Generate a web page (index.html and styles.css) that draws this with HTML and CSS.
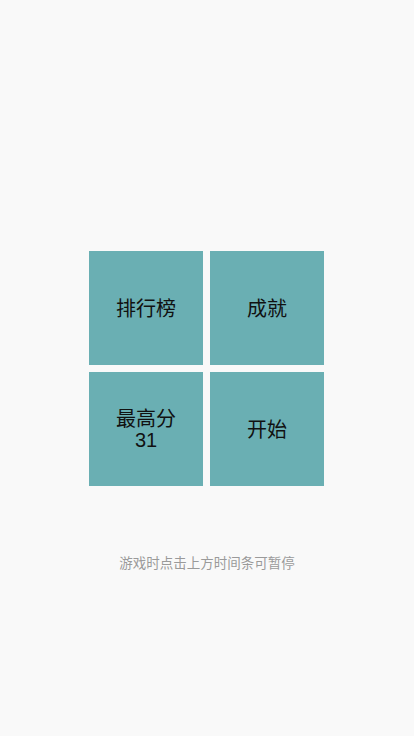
FILE: index.html
```html
<!DOCTYPE html>
<html lang="zh">
<head>
<meta charset="utf-8">
<title>菜单</title>
<link rel="stylesheet" href="styles.css">
</head>
<body>
<div class="page">
  <div class="spacer"></div>
  <div class="tiles">
    <div class="tile"><span class="label">排行榜</span></div>
    <div class="tile"><span class="label">成就</span></div>
    <div class="tile"><span class="label">最高分</span><span class="label score">31</span></div>
    <div class="tile"><span class="label">开始</span></div>
  </div>
  <div class="footer">
    <p class="note">游戏时点击上方时间条可暂停</p>
  </div>
</div>
</body>
</html>
```
FILE: styles.css
```css
html, body {
  margin: 0;
  padding: 0;
  background: #f9f9f9;
}
.page {
  height: 736px;
  display: grid;
  grid-template-rows: 1fr auto 1fr;
  justify-items: center;
  font-family: "Noto Sans CJK SC", "Noto Sans", sans-serif;
}
.tiles {
  display: grid;
  grid-template-columns: 114px 114px;
  grid-auto-rows: 114px;
  gap: 7px;
  margin-right: 1px;
}
.tile {
  background: #6aafb3;
  color: #111;
  font-size: 20px;
  display: flex;
  flex-direction: column;
  align-items: center;
  justify-content: center;
  text-align: center;
}
.label {
  display: block;
  line-height: 23px;
}
.score {
  font-family: "Liberation Sans", "Noto Sans", sans-serif;
  font-size: 20px;
}
.footer {
  align-self: start;
}
.note {
  margin: 66px 0 0;
  font-size: 13.5px;
  line-height: 20px;
  color: #9a9a9a;
}
```
